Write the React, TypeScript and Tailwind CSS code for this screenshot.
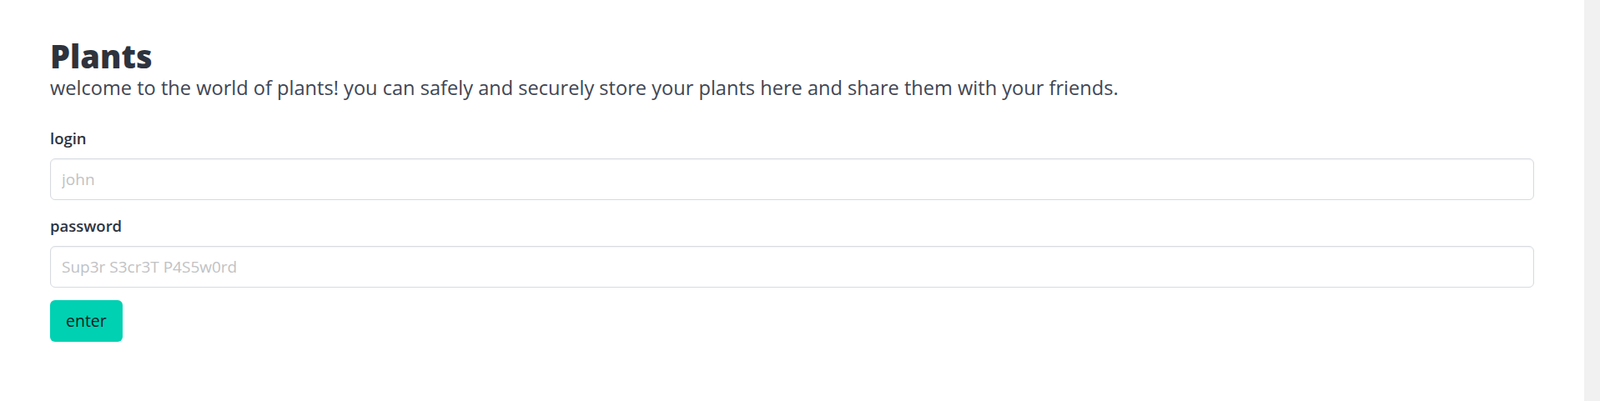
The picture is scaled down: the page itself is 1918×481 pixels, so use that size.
import React from "react";

const font = { fontFamily: '"Open Sans", "Noto Sans", Arial, sans-serif' };

function Field({ label, placeholder, type, className }: { label: string; placeholder: string; type: string; className?: string }) {
  return (
    <div className={className}>
      <label className="block text-[18.5px] leading-[24px] font-semibold text-[#2e333d]">{label}</label>
      <input
        type={type}
        placeholder={placeholder}
        className="mt-[12px] block w-full h-[50px] px-[13px] rounded-[6px] border border-[#d6dae0] bg-white text-[19px] text-[#2e333d] placeholder:text-[#c0c2c5] shadow-[inset_0_1px_2px_rgba(10,10,10,0.05)] outline-none"
      />
    </div>
  );
}

export default function App() {
  return (
    <div className="flex min-h-screen bg-white" style={font}>
      <main className="flex-1 px-[60px] pt-[48px]">
        <h1 className="text-[38px] leading-[38px] font-extrabold text-[#2e333d]">Plants</h1>
        <p className="mt-[5px] text-[23.6px] leading-[28px] text-[#404654]">
          welcome to the world of plants! you can safely and securely store your plants here and share them with your friends.
        </p>
        <form className="mt-[35px]" onSubmit={(e) => e.preventDefault()}>
          <Field label="login" placeholder="john" type="text" />
          <Field label="password" placeholder="Sup3r S3cr3T P4S5w0rd" type="password" className="mt-[19px]" />
          <button
            type="submit"
            className="mt-[15px] h-[50px] px-[19px] rounded-[6px] bg-[#00d1b2] text-[19.5px] text-[#14211f]"
          >
            enter
          </button>
        </form>
      </main>
      <div className="w-[19px] shrink-0 bg-[#f1f1f1]" />
    </div>
  );
}
